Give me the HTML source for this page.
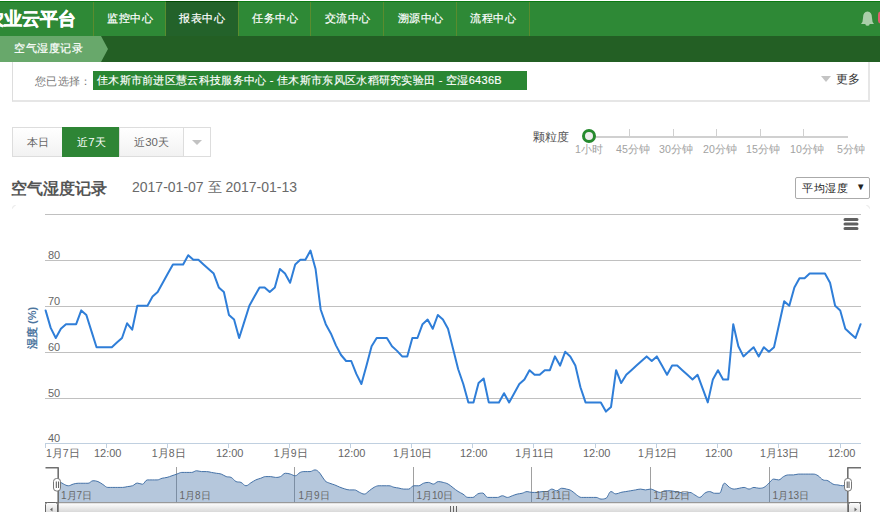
<!DOCTYPE html>
<html><head><meta charset="utf-8">
<style>
*{box-sizing:border-box}
html,body{margin:0;padding:0;width:880px;height:512px;overflow:hidden;background:#fff;font-family:"Liberation Sans",sans-serif}
.abs{position:absolute}
#nav{position:absolute;left:0;top:1px;width:880px;height:35px;background:#2e8936;border-top:1px solid #0b7a12}
.logo{position:absolute;left:-14px;top:7px;font-size:18px;font-weight:bold;-webkit-text-stroke:0.5px #fff;color:#fff;letter-spacing:0;white-space:nowrap;line-height:20px}
.sep{position:absolute;top:0;width:1px;height:34px;background:#5a8c2e}
.item{position:absolute;top:0;height:34px;line-height:32px;color:#fff;font-size:11px;letter-spacing:0.5px;-webkit-text-stroke:0.2px #fff;text-align:center}
.active{background:#23622a}
.activetop{position:absolute;top:-1px;height:1px;background:#004a00}
#crumb{position:absolute;left:0;top:36px;width:880px;height:26px;background:#235f24}
#crumb .lt{position:absolute;left:0;top:0;width:101px;height:26px;background:#68a86b}
#crumb .arr{position:absolute;left:101px;top:0;width:0;height:0;border-top:13px solid transparent;border-bottom:13px solid transparent;border-left:7px solid #68a86b}
#crumb .t{position:absolute;left:14px;top:0;line-height:24px;font-size:11px;letter-spacing:0.5px;-webkit-text-stroke:0.2px #fff;color:#fff;white-space:nowrap}
#selbox{position:absolute;left:12px;top:62px;width:858px;height:40px;border:1px solid #ddd;border-top:none;border-right:2px solid #e6e6e6;border-bottom:2px solid #e6e6e6;background:#fff}
.lbl{position:absolute;left:22px;top:11px;font-size:11px;letter-spacing:0.3px;color:#777;line-height:16px;white-space:nowrap}
.chip{position:absolute;left:80px;top:9px;width:434px;height:19px;background:#2a8633;color:#fff;font-size:11px;letter-spacing:0.3px;line-height:18px;padding-left:4px;-webkit-text-stroke:0.15px #fff;white-space:nowrap}
.more{position:absolute;left:823px;top:9px;font-size:12px;color:#333;line-height:16px}
.tri{position:absolute;left:808px;top:14px;width:0;height:0;border-left:5px solid transparent;border-right:5px solid transparent;border-top:6px solid #c4c4c4}
#btns{position:absolute;left:12px;top:127px;height:30px}
.b{position:absolute;top:0;height:30px;border:1px solid #ddd;background:linear-gradient(#fff,#f2f2f2);font-size:11.4px;color:#666;text-align:center;line-height:28px}
.b.on{background:#2e8535;border-color:#2e8535;color:#fff;padding-left:2px}
.caret{position:absolute;left:8px;top:12px;width:0;height:0;border-left:5px solid transparent;border-right:5px solid transparent;border-top:5px solid #c2c2c2}
.slbl{position:absolute;top:129px;font-size:12px;color:#555;line-height:16px;white-space:nowrap}
.tick{position:absolute;top:129px;width:1px;height:7px;background:#d0d0d0}
.track{position:absolute;left:589px;top:136px;width:259px;height:2px;background:#d0d0d0}
.knob{position:absolute;left:582px;top:129px;width:14px;height:14px;border-radius:50%;border:3px solid #268a2e;background:#eee}
.tl{position:absolute;top:142.5px;font-size:10.6px;color:#a2a2a2;line-height:12px;white-space:nowrap;transform:translateX(-50%)}
.title{position:absolute;left:11px;top:179px;font-size:16px;font-weight:bold;color:#555;line-height:20px;white-space:nowrap}
.date{position:absolute;left:132px;top:179px;font-size:14px;color:#6a6a6a;line-height:17px;white-space:nowrap}
.sel{position:absolute;left:795px;top:177px;width:75px;height:22px;border:1px solid #aaa;border-radius:2px;background:#fff;font-size:11px;letter-spacing:0.5px;color:#222;line-height:20px;padding-left:6px;white-space:nowrap}
.sel span{position:absolute;left:60px;top:-1px;font-size:9.5px}
svg{position:absolute;left:0;top:0}
.xl text.c{font-size:10.5px}
</style></head><body>
<div id="nav">
  <div class="logo">农业云平台</div>
  <div class="sep" style="left:93px"></div>
  <div class="item" style="left:94px;width:72px">监控中心</div>
  <div class="sep" style="left:165px"></div>
  <div class="item active" style="left:166px;width:72px">报表中心<div class="activetop" style="left:0;width:72px"></div></div>
  <div class="sep" style="left:238px"></div>
  <div class="item" style="left:239px;width:72px">任务中心</div>
  <div class="sep" style="left:310px"></div>
  <div class="item" style="left:311px;width:73px">交流中心</div>
  <div class="sep" style="left:383px"></div>
  <div class="item" style="left:384px;width:73px">溯源中心</div>
  <div class="sep" style="left:456px"></div>
  <div class="item" style="left:457px;width:72px">流程中心</div>
  <div class="sep" style="left:529px"></div>
</div>
<div id="crumb"><div class="lt"></div><div class="arr"></div><div class="t">空气湿度记录</div></div>
<div id="selbox">
  <div class="lbl">您已选择：</div>
  <div class="chip">佳木斯市前进区慧云科技服务中心 - 佳木斯市东风区水稻研究实验田 - 空湿<span style="font-size:11px">6436B</span></div>
  <div class="tri"></div>
  <div class="more">更多</div>
</div>
<div id="btns">
  <div class="b" style="left:0;width:51px">本日</div>
  <div class="b on" style="left:50px;width:57px">近7天</div>
  <div class="b" style="left:107px;width:65px">近30天</div>
  <div class="b" style="left:171px;width:28px;background:#fff"><div class="caret"></div></div>
</div>
<div class="slbl" style="left:533px">颗粒度</div>
<div class="track"></div>
<div class="tick" style="left:629px"></div>
<div class="tick" style="left:673px"></div>
<div class="tick" style="left:716px"></div>
<div class="tick" style="left:760px"></div>
<div class="tick" style="left:803px"></div>
<div class="knob"></div>
<div class="tl" style="left:589px">1小时</div>
<div class="tl" style="left:633px">45分钟</div>
<div class="tl" style="left:676px">30分钟</div>
<div class="tl" style="left:720px">20分钟</div>
<div class="tl" style="left:763px">15分钟</div>
<div class="tl" style="left:807px">10分钟</div>
<div class="tl" style="left:851px">5分钟</div>
<div class="title">空气湿度记录</div>
<div class="date">2017-01-07 至 2017-01-13</div>
<div class="sel">平均湿度<span>▼</span></div>

<svg width="880" height="512" viewBox="0 0 880 512" style="font-family:'Liberation Sans',sans-serif">
  <!-- bell -->
  <path d="M861 24 Q863 22 863 18 Q863 11.5 867.5 11.5 Q872 11.5 872 18 Q872 22 874 24 Z" fill="#a9cfa9"/>
  <ellipse cx="867.5" cy="24.5" rx="2" ry="1.3" fill="#a9cfa9"/>
  <rect x="878" y="11.5" width="6" height="12" rx="3" fill="#e05c6c"/>
  <path d="M12.5 208.5 Q12.5 205.5 15.5 205.5 M866.5 205.5 Q869.5 205.5 869.5 208.5" fill="none" stroke="#e6e6e6" stroke-width="1"/>
  <!-- grid -->
  <g stroke="#c0c0c0" stroke-width="1" shape-rendering="crispEdges">
    <path d="M45 214.5 L861 214.5 M45 260.5 L861 260.5 M45 306.5 L861 306.5 M45 352.5 L861 352.5 M45 398.5 L861 398.5"/>
  </g>
  <path d="M45 443.5 L861 443.5" stroke="#c0d0e0" stroke-width="1"/>
  <g stroke="#c0d0e0" stroke-width="1">
    <path d="M45.5 444 V448 M106.5 444 V448 M167.5 444 V448 M228.5 444 V448 M289.5 444 V448 M350.5 444 V448 M411.5 444 V448 M472.5 444 V448 M533.5 444 V448 M595.5 444 V448 M656.5 444 V448 M717.5 444 V448 M778.5 444 V448 M840.5 444 V448"/>
  </g>
  <g font-size="11" fill="#666">
    <text x="48" y="259">80</text>
    <text x="48" y="305">70</text>
    <text x="48" y="351">60</text>
    <text x="48" y="397">50</text>
    <text x="48" y="442">40</text>
  </g>
  <text transform="translate(36.3 328) rotate(-90)" text-anchor="middle" font-size="11" font-weight="bold" fill="#4d759e">湿度 (%)</text>
  <g font-size="11" fill="#666" text-anchor="middle" class="xl">
    <text x="46" y="457" class="c" text-anchor="start">1月7日</text>
    <text x="107.7" y="457">12:00</text>
    <text x="168.7" y="457" class="c">1月8日</text>
    <text x="229.7" y="457">12:00</text>
    <text x="290.7" y="457" class="c">1月9日</text>
    <text x="351.7" y="457">12:00</text>
    <text x="412.7" y="457" class="c">1月10日</text>
    <text x="473.7" y="457">12:00</text>
    <text x="534.7" y="457" class="c">1月11日</text>
    <text x="596.7" y="457">12:00</text>
    <text x="657.7" y="457" class="c">1月12日</text>
    <text x="718.7" y="457">12:00</text>
    <text x="779.7" y="457" class="c">1月13日</text>
    <text x="841.7" y="457">12:00</text>
  </g>
  <path d="M45.60 310.40 L50.69 327.88 L55.79 338.00 L60.88 328.80 L65.97 324.20 L71.07 324.20 L76.16 324.20 L81.26 310.40 L86.35 315.00 L91.44 331.10 L96.54 347.20 L101.63 347.20 L106.72 347.20 L111.82 347.20 L116.91 342.60 L122.01 338.00 L127.10 323.28 L132.19 329.72 L137.29 305.80 L142.38 305.80 L147.47 305.80 L152.57 296.60 L157.66 292.00 L162.76 282.80 L167.85 273.60 L172.94 264.40 L178.04 264.40 L183.13 264.40 L188.22 255.20 L193.32 259.80 L198.41 259.80 L203.51 264.40 L208.60 269.00 L213.69 273.60 L218.79 287.40 L223.88 292.00 L228.97 315.00 L234.07 319.60 L239.16 338.00 L244.26 321.90 L249.35 305.80 L254.44 296.60 L259.54 287.40 L264.63 287.40 L269.73 292.00 L274.82 287.40 L279.91 269.00 L285.01 273.60 L290.10 282.80 L295.19 264.40 L300.29 259.80 L305.38 259.80 L310.48 250.60 L315.57 269.00 L320.66 309.48 L325.76 324.20 L330.85 333.40 L335.94 345.36 L341.04 355.02 L346.13 361.00 L351.23 361.00 L356.32 373.88 L361.41 384.00 L366.51 365.60 L371.60 346.28 L376.69 338.00 L381.79 338.00 L386.88 338.00 L391.98 346.28 L397.07 350.88 L402.16 356.40 L407.26 356.40 L412.35 338.00 L417.44 338.00 L422.54 324.20 L427.63 319.60 L432.73 328.80 L437.82 315.00 L442.91 319.60 L448.01 328.80 L453.10 349.04 L458.19 369.28 L463.29 384.00 L468.38 402.40 L473.48 402.40 L478.57 383.08 L483.66 378.48 L488.76 402.40 L493.85 402.40 L498.94 402.40 L504.04 393.20 L509.13 402.40 L514.23 393.20 L519.32 384.00 L524.41 379.40 L529.51 370.20 L534.60 374.80 L539.69 374.80 L544.79 370.20 L549.88 370.20 L554.98 356.40 L560.07 365.60 L565.16 351.80 L570.26 356.40 L575.35 365.60 L580.44 387.22 L585.54 402.40 L590.63 402.40 L595.73 402.40 L600.82 402.40 L605.91 411.60 L611.01 407.00 L616.10 370.20 L621.19 383.08 L626.29 374.80 L631.38 370.20 L636.48 365.60 L641.57 361.00 L646.66 356.40 L651.76 361.00 L656.85 356.40 L661.94 365.60 L667.04 374.80 L672.13 365.60 L677.23 365.60 L682.32 370.20 L687.41 374.80 L692.51 379.40 L697.60 374.80 L702.69 388.60 L707.79 402.40 L712.88 379.40 L717.98 370.20 L723.07 379.40 L728.16 379.40 L733.26 324.20 L738.35 346.28 L743.44 356.40 L748.54 351.80 L753.63 347.20 L758.73 356.40 L763.82 347.20 L768.91 351.80 L774.01 347.20 L779.10 324.20 L784.19 301.20 L789.29 305.80 L794.38 287.40 L799.48 278.20 L804.57 278.20 L809.66 273.60 L814.76 273.60 L819.85 273.60 L824.94 273.60 L830.04 282.80 L835.13 305.80 L840.23 310.40 L845.32 328.80 L850.41 333.40 L855.51 338.00 L860.60 324.20" fill="none" stroke="#2f7ed8" stroke-width="2" stroke-linejoin="round" stroke-linecap="round"/>
  <!-- menu -->
  <path d="M845 219.5 H857 M845 224 H857 M845 228.5 H857" stroke="#606060" stroke-width="3" stroke-linecap="round"/>
  <!-- navigator -->
  <g stroke="#a0a0a0" stroke-width="1">
    <path d="M176.5 467 V502 M294.5 467 V502 M413.5 467 V502 M531.5 467 V502 M650.5 467 V502 M769.5 467 V502"/>
  </g>
  <path d="M58.50 480.75 C58.50 480.75 61.46 482.92 63.43 483.92 C65.41 484.92 66.39 485.75 68.36 485.75 C70.34 485.75 71.32 484.58 73.30 484.08 C75.27 483.58 76.26 483.25 78.23 483.25 C80.20 483.25 81.19 483.25 83.16 483.25 C85.14 483.25 86.12 483.25 88.09 483.25 C90.07 483.25 91.05 480.75 93.03 480.75 C95.00 480.75 95.99 480.83 97.96 481.58 C99.93 482.33 100.92 483.33 102.89 484.50 C104.87 485.67 105.85 487.42 107.83 487.42 C109.80 487.42 110.78 487.42 112.76 487.42 C114.73 487.42 115.72 487.42 117.69 487.42 C119.66 487.42 120.65 487.42 122.62 487.42 C124.60 487.42 125.58 486.92 127.56 486.58 C129.53 486.25 130.51 486.45 132.49 485.75 C134.46 485.05 135.45 483.08 137.42 483.08 C139.39 483.08 140.38 484.25 142.35 484.25 C144.33 484.25 145.31 479.92 147.28 479.92 C149.26 479.92 150.24 479.92 152.22 479.92 C154.19 479.92 155.18 479.92 157.15 479.92 C159.12 479.92 160.11 478.75 162.08 478.25 C164.06 477.75 165.04 477.92 167.02 477.42 C168.99 476.92 169.97 476.42 171.95 475.75 C173.92 475.08 174.91 474.75 176.88 474.08 C178.85 473.42 179.84 472.42 181.81 472.42 C183.79 472.42 184.77 472.42 186.75 472.42 C188.72 472.42 189.70 472.42 191.68 472.42 C193.65 472.42 194.64 470.75 196.61 470.75 C198.58 470.75 199.57 471.58 201.54 471.58 C203.52 471.58 204.50 471.58 206.47 471.58 C208.45 471.58 209.43 472.08 211.41 472.42 C213.38 472.75 214.37 472.92 216.34 473.25 C218.31 473.58 219.30 473.42 221.27 474.08 C223.25 474.75 224.23 475.92 226.21 476.58 C228.18 477.25 229.16 476.58 231.14 477.42 C233.11 478.25 234.10 480.75 236.07 481.58 C238.04 482.42 239.03 481.58 241.00 482.42 C242.98 483.25 243.96 485.75 245.94 485.75 C247.91 485.75 248.89 484.00 250.87 482.83 C252.84 481.67 253.83 480.83 255.80 479.92 C257.77 479.00 258.76 478.92 260.73 478.25 C262.71 477.58 263.69 476.58 265.67 476.58 C267.64 476.58 268.62 476.58 270.60 476.58 C272.57 476.58 273.56 477.42 275.53 477.42 C277.50 477.42 278.49 477.42 280.46 476.58 C282.44 475.75 283.42 473.25 285.40 473.25 C287.37 473.25 288.35 473.58 290.33 474.08 C292.30 474.58 293.29 475.75 295.26 475.75 C297.23 475.75 298.22 473.25 300.19 472.42 C302.17 471.58 303.15 471.58 305.12 471.58 C307.10 471.58 308.08 471.58 310.06 471.58 C312.03 471.58 313.02 469.92 314.99 469.92 C316.96 469.92 317.95 471.12 319.92 473.25 C321.90 475.38 322.88 478.58 324.86 480.58 C326.83 482.58 327.81 482.38 329.79 483.25 C331.76 484.12 332.75 484.15 334.72 484.92 C336.69 485.68 337.68 486.30 339.65 487.08 C341.63 487.87 342.61 488.27 344.59 488.83 C346.56 489.40 347.54 489.92 349.52 489.92 C351.49 489.92 352.48 489.92 354.45 489.92 C356.42 489.92 357.41 491.42 359.38 492.25 C361.36 493.08 362.34 494.08 364.31 494.08 C366.29 494.08 367.27 492.12 369.25 490.75 C371.22 489.38 372.21 488.25 374.18 487.25 C376.15 486.25 377.14 485.75 379.11 485.75 C381.09 485.75 382.07 485.75 384.05 485.75 C386.02 485.75 387.00 485.75 388.98 485.75 C390.95 485.75 391.94 486.78 393.91 487.25 C395.88 487.72 396.87 487.72 398.84 488.08 C400.82 488.45 401.80 489.08 403.77 489.08 C405.75 489.08 406.73 489.08 408.71 489.08 C410.68 489.08 411.67 485.75 413.64 485.75 C415.61 485.75 416.60 485.75 418.57 485.75 C420.55 485.75 421.53 483.92 423.50 483.25 C425.48 482.58 426.46 482.42 428.44 482.42 C430.41 482.42 431.40 484.08 433.37 484.08 C435.34 484.08 436.33 481.58 438.30 481.58 C440.28 481.58 441.26 481.92 443.24 482.42 C445.21 482.92 446.19 483.02 448.17 484.08 C450.14 485.15 451.13 486.28 453.10 487.75 C455.07 489.22 456.06 490.15 458.03 491.42 C460.01 492.68 460.99 492.88 462.97 494.08 C464.94 495.28 465.92 497.42 467.90 497.42 C469.87 497.42 470.86 497.42 472.83 497.42 C474.80 497.42 475.79 494.75 477.76 493.92 C479.74 493.08 480.72 493.08 482.69 493.08 C484.67 493.08 485.65 497.42 487.63 497.42 C489.60 497.42 490.59 497.42 492.56 497.42 C494.53 497.42 495.52 497.42 497.49 497.42 C499.47 497.42 500.45 495.75 502.43 495.75 C504.40 495.75 505.38 497.42 507.36 497.42 C509.33 497.42 510.32 496.42 512.29 495.75 C514.26 495.08 515.25 494.58 517.22 494.08 C519.20 493.58 520.18 493.75 522.15 493.25 C524.13 492.75 525.11 491.58 527.09 491.58 C529.06 491.58 530.05 492.42 532.02 492.42 C533.99 492.42 534.98 492.42 536.95 492.42 C538.93 492.42 539.91 491.58 541.88 491.58 C543.86 491.58 544.84 491.58 546.82 491.58 C548.79 491.58 549.78 489.08 551.75 489.08 C553.72 489.08 554.71 490.75 556.68 490.75 C558.66 490.75 559.64 488.25 561.62 488.25 C563.59 488.25 564.57 488.58 566.55 489.08 C568.52 489.58 569.51 489.63 571.48 490.75 C573.45 491.87 574.44 493.33 576.41 494.67 C578.39 496.00 579.37 497.42 581.35 497.42 C583.32 497.42 584.30 497.42 586.28 497.42 C588.25 497.42 589.24 497.42 591.21 497.42 C593.18 497.42 594.17 497.42 596.14 497.42 C598.12 497.42 599.10 499.08 601.08 499.08 C603.05 499.08 604.03 499.08 606.01 498.25 C607.98 497.42 608.97 491.58 610.94 491.58 C612.91 491.58 613.90 493.92 615.87 493.92 C617.85 493.92 618.83 492.88 620.81 492.42 C622.78 491.95 623.76 491.92 625.74 491.58 C627.71 491.25 628.70 491.08 630.67 490.75 C632.64 490.42 633.63 490.25 635.60 489.92 C637.58 489.58 638.56 489.08 640.54 489.08 C642.51 489.08 643.49 489.92 645.47 489.92 C647.44 489.92 648.43 489.08 650.40 489.08 C652.37 489.08 653.36 490.08 655.33 490.75 C657.31 491.42 658.29 492.42 660.27 492.42 C662.24 492.42 663.22 490.75 665.20 490.75 C667.17 490.75 668.16 490.75 670.13 490.75 C672.10 490.75 673.09 491.25 675.06 491.58 C677.04 491.92 678.02 492.08 680.00 492.42 C681.97 492.75 682.95 493.25 684.93 493.25 C686.90 493.25 687.89 492.42 689.86 492.42 C691.83 492.42 692.82 493.92 694.79 494.92 C696.77 495.92 697.75 497.42 699.73 497.42 C701.70 497.42 702.68 494.42 704.66 493.25 C706.63 492.08 707.62 491.58 709.59 491.58 C711.56 491.58 712.55 493.25 714.52 493.25 C716.50 493.25 717.48 493.25 719.46 493.25 C721.43 493.25 722.41 483.25 724.39 483.25 C726.36 483.25 727.35 486.08 729.32 487.25 C731.29 488.42 732.28 489.08 734.25 489.08 C736.23 489.08 737.21 488.58 739.19 488.25 C741.16 487.92 742.14 487.42 744.12 487.42 C746.09 487.42 747.08 489.08 749.05 489.08 C751.02 489.08 752.01 487.42 753.98 487.42 C755.96 487.42 756.94 488.25 758.92 488.25 C760.89 488.25 761.87 488.25 763.85 487.42 C765.82 486.58 766.81 484.92 768.78 483.25 C770.75 481.58 771.74 479.08 773.71 479.08 C775.69 479.08 776.67 479.92 778.65 479.92 C780.62 479.92 781.60 477.58 783.58 476.58 C785.55 475.58 786.54 474.92 788.51 474.92 C790.48 474.92 791.47 474.92 793.44 474.92 C795.42 474.92 796.40 474.08 798.38 474.08 C800.35 474.08 801.33 474.08 803.31 474.08 C805.28 474.08 806.27 474.08 808.24 474.08 C810.21 474.08 811.20 474.08 813.17 474.08 C815.15 474.08 816.13 474.58 818.11 475.75 C820.08 476.92 821.06 479.08 823.04 479.92 C825.01 480.75 826.00 479.92 827.97 480.75 C829.94 481.58 830.93 483.25 832.90 484.08 C834.88 484.92 835.86 484.58 837.84 484.92 C839.81 485.25 840.79 485.75 842.77 485.75 C844.74 485.75 847.70 483.25 847.70 483.25 L847.70 502.00 L58.50 502.00 Z" fill="#4572a7" fill-opacity="0.4"/>
  <path d="M58.50 480.75 C58.50 480.75 61.46 482.92 63.43 483.92 C65.41 484.92 66.39 485.75 68.36 485.75 C70.34 485.75 71.32 484.58 73.30 484.08 C75.27 483.58 76.26 483.25 78.23 483.25 C80.20 483.25 81.19 483.25 83.16 483.25 C85.14 483.25 86.12 483.25 88.09 483.25 C90.07 483.25 91.05 480.75 93.03 480.75 C95.00 480.75 95.99 480.83 97.96 481.58 C99.93 482.33 100.92 483.33 102.89 484.50 C104.87 485.67 105.85 487.42 107.83 487.42 C109.80 487.42 110.78 487.42 112.76 487.42 C114.73 487.42 115.72 487.42 117.69 487.42 C119.66 487.42 120.65 487.42 122.62 487.42 C124.60 487.42 125.58 486.92 127.56 486.58 C129.53 486.25 130.51 486.45 132.49 485.75 C134.46 485.05 135.45 483.08 137.42 483.08 C139.39 483.08 140.38 484.25 142.35 484.25 C144.33 484.25 145.31 479.92 147.28 479.92 C149.26 479.92 150.24 479.92 152.22 479.92 C154.19 479.92 155.18 479.92 157.15 479.92 C159.12 479.92 160.11 478.75 162.08 478.25 C164.06 477.75 165.04 477.92 167.02 477.42 C168.99 476.92 169.97 476.42 171.95 475.75 C173.92 475.08 174.91 474.75 176.88 474.08 C178.85 473.42 179.84 472.42 181.81 472.42 C183.79 472.42 184.77 472.42 186.75 472.42 C188.72 472.42 189.70 472.42 191.68 472.42 C193.65 472.42 194.64 470.75 196.61 470.75 C198.58 470.75 199.57 471.58 201.54 471.58 C203.52 471.58 204.50 471.58 206.47 471.58 C208.45 471.58 209.43 472.08 211.41 472.42 C213.38 472.75 214.37 472.92 216.34 473.25 C218.31 473.58 219.30 473.42 221.27 474.08 C223.25 474.75 224.23 475.92 226.21 476.58 C228.18 477.25 229.16 476.58 231.14 477.42 C233.11 478.25 234.10 480.75 236.07 481.58 C238.04 482.42 239.03 481.58 241.00 482.42 C242.98 483.25 243.96 485.75 245.94 485.75 C247.91 485.75 248.89 484.00 250.87 482.83 C252.84 481.67 253.83 480.83 255.80 479.92 C257.77 479.00 258.76 478.92 260.73 478.25 C262.71 477.58 263.69 476.58 265.67 476.58 C267.64 476.58 268.62 476.58 270.60 476.58 C272.57 476.58 273.56 477.42 275.53 477.42 C277.50 477.42 278.49 477.42 280.46 476.58 C282.44 475.75 283.42 473.25 285.40 473.25 C287.37 473.25 288.35 473.58 290.33 474.08 C292.30 474.58 293.29 475.75 295.26 475.75 C297.23 475.75 298.22 473.25 300.19 472.42 C302.17 471.58 303.15 471.58 305.12 471.58 C307.10 471.58 308.08 471.58 310.06 471.58 C312.03 471.58 313.02 469.92 314.99 469.92 C316.96 469.92 317.95 471.12 319.92 473.25 C321.90 475.38 322.88 478.58 324.86 480.58 C326.83 482.58 327.81 482.38 329.79 483.25 C331.76 484.12 332.75 484.15 334.72 484.92 C336.69 485.68 337.68 486.30 339.65 487.08 C341.63 487.87 342.61 488.27 344.59 488.83 C346.56 489.40 347.54 489.92 349.52 489.92 C351.49 489.92 352.48 489.92 354.45 489.92 C356.42 489.92 357.41 491.42 359.38 492.25 C361.36 493.08 362.34 494.08 364.31 494.08 C366.29 494.08 367.27 492.12 369.25 490.75 C371.22 489.38 372.21 488.25 374.18 487.25 C376.15 486.25 377.14 485.75 379.11 485.75 C381.09 485.75 382.07 485.75 384.05 485.75 C386.02 485.75 387.00 485.75 388.98 485.75 C390.95 485.75 391.94 486.78 393.91 487.25 C395.88 487.72 396.87 487.72 398.84 488.08 C400.82 488.45 401.80 489.08 403.77 489.08 C405.75 489.08 406.73 489.08 408.71 489.08 C410.68 489.08 411.67 485.75 413.64 485.75 C415.61 485.75 416.60 485.75 418.57 485.75 C420.55 485.75 421.53 483.92 423.50 483.25 C425.48 482.58 426.46 482.42 428.44 482.42 C430.41 482.42 431.40 484.08 433.37 484.08 C435.34 484.08 436.33 481.58 438.30 481.58 C440.28 481.58 441.26 481.92 443.24 482.42 C445.21 482.92 446.19 483.02 448.17 484.08 C450.14 485.15 451.13 486.28 453.10 487.75 C455.07 489.22 456.06 490.15 458.03 491.42 C460.01 492.68 460.99 492.88 462.97 494.08 C464.94 495.28 465.92 497.42 467.90 497.42 C469.87 497.42 470.86 497.42 472.83 497.42 C474.80 497.42 475.79 494.75 477.76 493.92 C479.74 493.08 480.72 493.08 482.69 493.08 C484.67 493.08 485.65 497.42 487.63 497.42 C489.60 497.42 490.59 497.42 492.56 497.42 C494.53 497.42 495.52 497.42 497.49 497.42 C499.47 497.42 500.45 495.75 502.43 495.75 C504.40 495.75 505.38 497.42 507.36 497.42 C509.33 497.42 510.32 496.42 512.29 495.75 C514.26 495.08 515.25 494.58 517.22 494.08 C519.20 493.58 520.18 493.75 522.15 493.25 C524.13 492.75 525.11 491.58 527.09 491.58 C529.06 491.58 530.05 492.42 532.02 492.42 C533.99 492.42 534.98 492.42 536.95 492.42 C538.93 492.42 539.91 491.58 541.88 491.58 C543.86 491.58 544.84 491.58 546.82 491.58 C548.79 491.58 549.78 489.08 551.75 489.08 C553.72 489.08 554.71 490.75 556.68 490.75 C558.66 490.75 559.64 488.25 561.62 488.25 C563.59 488.25 564.57 488.58 566.55 489.08 C568.52 489.58 569.51 489.63 571.48 490.75 C573.45 491.87 574.44 493.33 576.41 494.67 C578.39 496.00 579.37 497.42 581.35 497.42 C583.32 497.42 584.30 497.42 586.28 497.42 C588.25 497.42 589.24 497.42 591.21 497.42 C593.18 497.42 594.17 497.42 596.14 497.42 C598.12 497.42 599.10 499.08 601.08 499.08 C603.05 499.08 604.03 499.08 606.01 498.25 C607.98 497.42 608.97 491.58 610.94 491.58 C612.91 491.58 613.90 493.92 615.87 493.92 C617.85 493.92 618.83 492.88 620.81 492.42 C622.78 491.95 623.76 491.92 625.74 491.58 C627.71 491.25 628.70 491.08 630.67 490.75 C632.64 490.42 633.63 490.25 635.60 489.92 C637.58 489.58 638.56 489.08 640.54 489.08 C642.51 489.08 643.49 489.92 645.47 489.92 C647.44 489.92 648.43 489.08 650.40 489.08 C652.37 489.08 653.36 490.08 655.33 490.75 C657.31 491.42 658.29 492.42 660.27 492.42 C662.24 492.42 663.22 490.75 665.20 490.75 C667.17 490.75 668.16 490.75 670.13 490.75 C672.10 490.75 673.09 491.25 675.06 491.58 C677.04 491.92 678.02 492.08 680.00 492.42 C681.97 492.75 682.95 493.25 684.93 493.25 C686.90 493.25 687.89 492.42 689.86 492.42 C691.83 492.42 692.82 493.92 694.79 494.92 C696.77 495.92 697.75 497.42 699.73 497.42 C701.70 497.42 702.68 494.42 704.66 493.25 C706.63 492.08 707.62 491.58 709.59 491.58 C711.56 491.58 712.55 493.25 714.52 493.25 C716.50 493.25 717.48 493.25 719.46 493.25 C721.43 493.25 722.41 483.25 724.39 483.25 C726.36 483.25 727.35 486.08 729.32 487.25 C731.29 488.42 732.28 489.08 734.25 489.08 C736.23 489.08 737.21 488.58 739.19 488.25 C741.16 487.92 742.14 487.42 744.12 487.42 C746.09 487.42 747.08 489.08 749.05 489.08 C751.02 489.08 752.01 487.42 753.98 487.42 C755.96 487.42 756.94 488.25 758.92 488.25 C760.89 488.25 761.87 488.25 763.85 487.42 C765.82 486.58 766.81 484.92 768.78 483.25 C770.75 481.58 771.74 479.08 773.71 479.08 C775.69 479.08 776.67 479.92 778.65 479.92 C780.62 479.92 781.60 477.58 783.58 476.58 C785.55 475.58 786.54 474.92 788.51 474.92 C790.48 474.92 791.47 474.92 793.44 474.92 C795.42 474.92 796.40 474.08 798.38 474.08 C800.35 474.08 801.33 474.08 803.31 474.08 C805.28 474.08 806.27 474.08 808.24 474.08 C810.21 474.08 811.20 474.08 813.17 474.08 C815.15 474.08 816.13 474.58 818.11 475.75 C820.08 476.92 821.06 479.08 823.04 479.92 C825.01 480.75 826.00 479.92 827.97 480.75 C829.94 481.58 830.93 483.25 832.90 484.08 C834.88 484.92 835.86 484.58 837.84 484.92 C839.81 485.25 840.79 485.75 842.77 485.75 C844.74 485.75 847.70 483.25 847.70 483.25" fill="none" stroke="#4572a7" stroke-width="1"/>
  <g font-size="10" fill="#666">
    <text x="61" y="499">1月7日</text>
    <text x="179.5" y="499">1月8日</text>
    <text x="298.5" y="499">1月9日</text>
    <text x="416.5" y="499">1月10日</text>
    <text x="535.5" y="499">1月11日</text>
    <text x="653.5" y="499">1月12日</text>
    <text x="772.5" y="499">1月13日</text>
  </g>
  <!-- scrollbar -->
  <defs>
    <linearGradient id="sg" x1="0" y1="0" x2="0" y2="1"><stop offset="0" stop-color="#fff"/><stop offset="1" stop-color="#ccc"/></linearGradient>
  </defs>
  <path d="M45 502.5 H861" stroke="#666" stroke-width="1"/>
  <rect x="58" y="503" width="790" height="12" fill="url(#sg)" stroke="#ccc"/>
  <rect x="45.5" y="502.5" width="12" height="14" rx="2" fill="url(#sg)" stroke="#666"/>
  <rect x="848.5" y="502.5" width="12" height="14" rx="2" fill="url(#sg)" stroke="#666"/>
  <path d="M52.5 507.5 L50 509.5 L52.5 511.5 Z" fill="#666"/>
  <path d="M854.5 507.5 L857 509.5 L854.5 511.5 Z" fill="#666"/>
  <path d="M450.5 506 V512 M453.5 506 V512 M456.5 506 V512" stroke="#666" stroke-width="1"/>
  <!-- outline -->
  <path d="M45.5 467.7 H58.2 V502 M847.8 502 V467.7 H861" fill="none" stroke="#707070" stroke-width="1.6" stroke-linejoin="round"/>
  <path d="M58.2 502 V512 M847.8 502 V512" stroke="#666" stroke-width="1"/>
  <!-- handles -->
  <rect x="53.5" y="478.5" width="7" height="12.5" rx="3" fill="#fff" stroke="#777"/>
  <path d="M56.3 481.5 V488 M58.6 481.5 V488" stroke="#555" stroke-width="1"/>
  <rect x="844.5" y="478.5" width="7" height="12.5" rx="3" fill="#fff" stroke="#777"/>
  <path d="M847.2 481.5 V488 M849 481.5 V488" stroke="#555" stroke-width="1"/>
</svg>
</body></html>
